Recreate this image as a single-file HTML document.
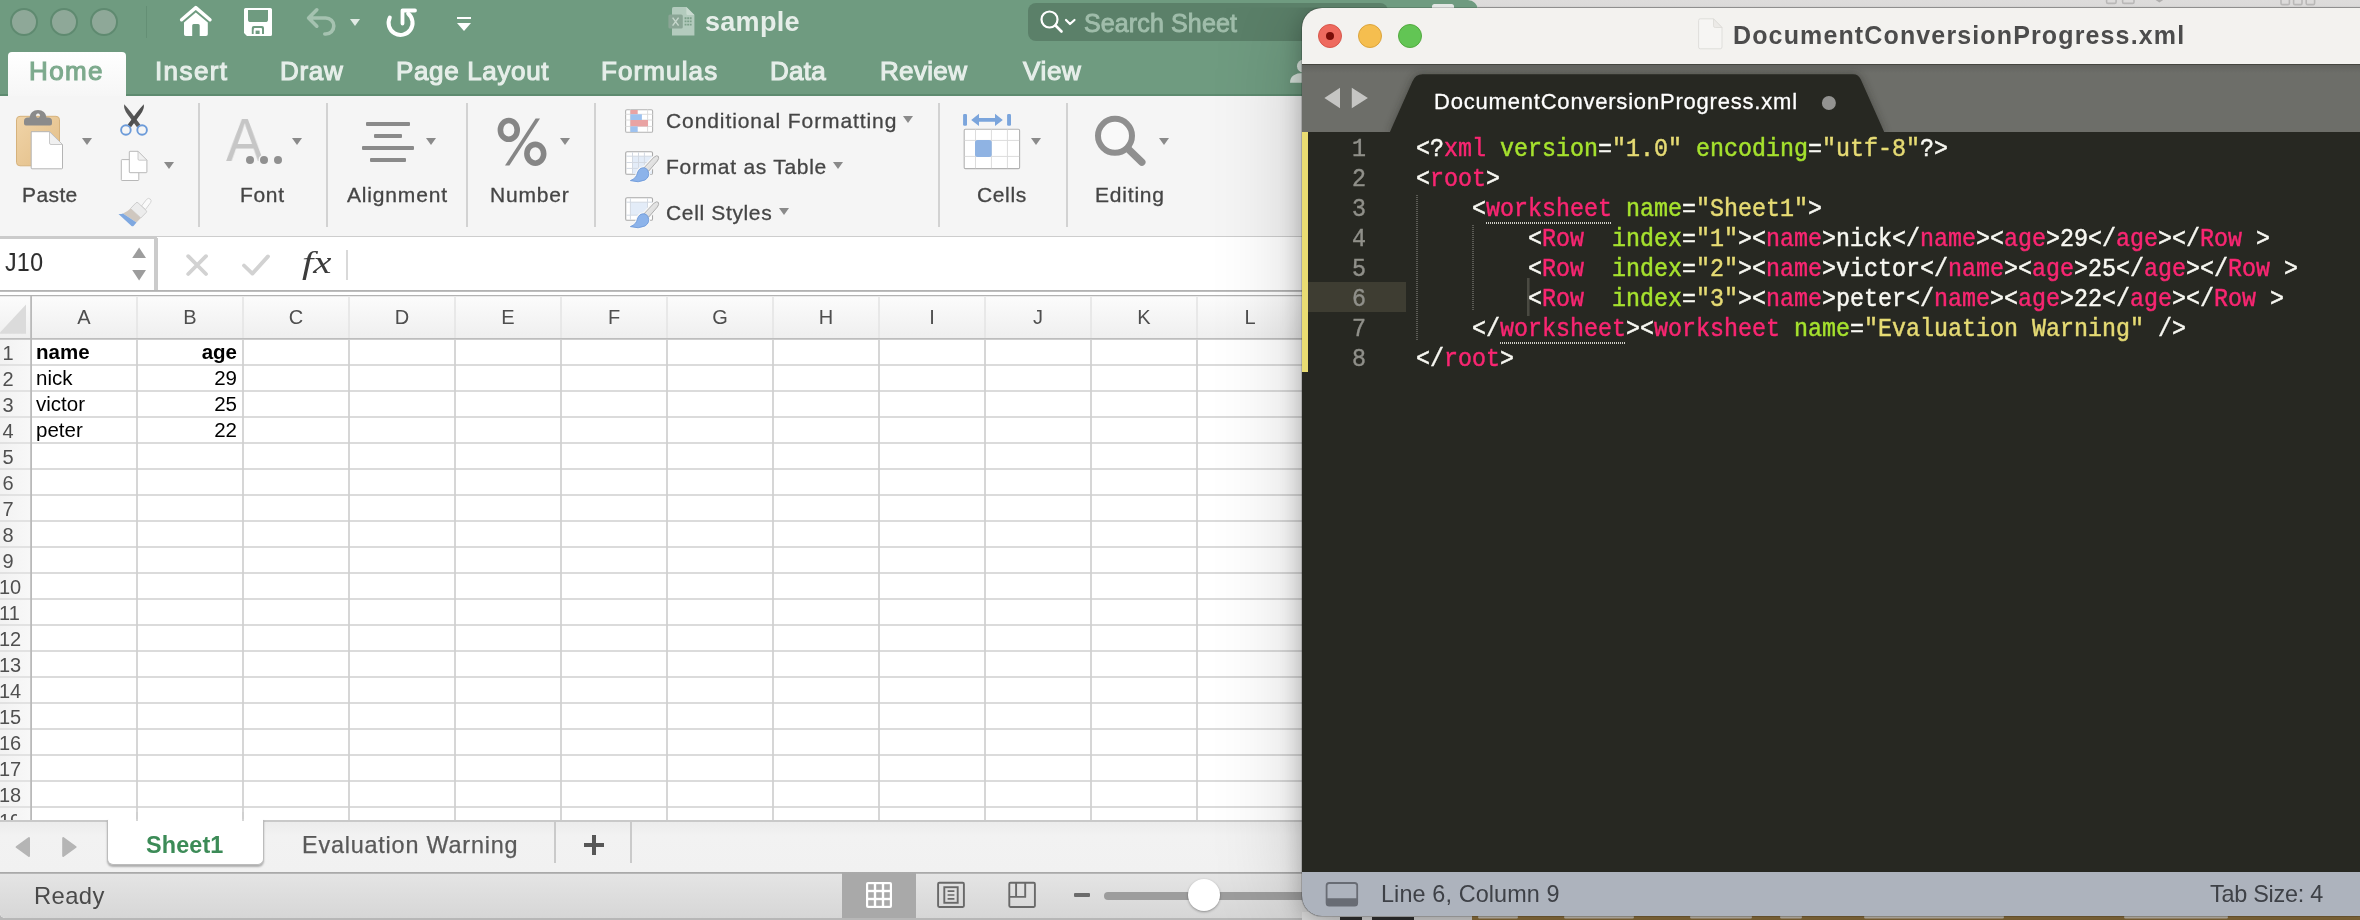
<!DOCTYPE html>
<html>
<head>
<meta charset="utf-8">
<title>screen</title>
<style>
html,body{margin:0;padding:0;}
body{width:2360px;height:920px;overflow:hidden;position:relative;background:#b7b7b7;font-family:"Liberation Sans",sans-serif;}
.a{position:absolute;}
.t{position:absolute;white-space:nowrap;line-height:1;will-change:transform;}
/* ---------- Excel ---------- */
#xl{left:0;top:0;width:1478px;height:918.2px;background:#fff;overflow:hidden;border-radius:0 10px 6px 5px;}
#xl-title{left:0;top:0;width:1478px;height:95.6px;background:linear-gradient(#6f9b80,#6f9b80 94.2px,#5e8b70 94.4px,#5e8b70);}
#xl-ribbon{left:0;top:95.6px;width:1478px;height:142px;background:#f5f5f5;}
#xl-fbar{left:0;top:237px;width:1478px;height:58px;background:#fff;}
.tl{top:8px;width:24px;height:24px;border-radius:50%;background:#8ea898;border:2px solid #5f8a70;}
.rt{color:#e6eee9;font-size:26px;top:58px;-webkit-text-stroke:1.1px #e6eee9;}
.rl{color:#454545;font-size:21px;-webkit-text-stroke:0.3px #454545;}
.sep{position:absolute;width:2px;background:#d2d2d2;top:103px;height:124px;}
.dd{position:absolute;width:0;height:0;border-left:5px solid transparent;border-right:5px solid transparent;border-top:7px solid #8a8a8a;}
/* grid */
#grid{left:0;top:295px;width:1478px;height:526px;background:#fff;overflow:hidden;}
.ch{color:#4e4e4e;font-size:20px;top:306.6px;width:106px;text-align:center;}
.rh{color:#505050;font-size:20px;left:-1.3px;}
.ct{color:#000;font-size:20.5px;}
/* ---------- Sublime ---------- */
#st{left:1302px;top:8px;width:1080px;height:907.5px;background:#272822;border-radius:20px 0 0 20px;overflow:hidden;box-shadow:0 0 0 1px rgba(0,0,0,.16),0 0 90px 0 rgba(0,0,0,.2),0 6px 24px 0 rgba(0,0,0,.26);clip-path:inset(-0.5px 0 -20px -140px);}
#st-title{left:0;top:0;width:1080px;height:56px;background:#f3f2ef;}
#st-tabs{left:0;top:57px;width:1080px;height:67px;background:linear-gradient(#62635f,#6d6e69 8px,#6d6e69);}
#st-status{left:0;top:863.6px;width:1080px;height:44px;background:#adb3bd;}
.stl{top:16px;width:22.4px;height:22.4px;border-radius:50%;border:1px solid;}
.code{font-family:"Liberation Mono",monospace;font-size:23.33px;color:#f8f8f2;position:absolute;white-space:pre;line-height:30px;left:114px;transform:scaleY(1.08);transform-origin:0 100%;-webkit-text-stroke-width:0.45px;margin-top:4px;will-change:transform;}
.ln{font-family:"Liberation Mono",monospace;font-size:23.33px;color:#90908a;position:absolute;line-height:30px;left:50px;transform:scaleY(1.08);transform-origin:0 100%;-webkit-text-stroke-width:0.4px;margin-top:4px;will-change:transform;}
.p{color:#f92672}.g{color:#a6e22e}.y{color:#e6db74}
</style>
</head>
<body>
<!-- background window sliver -->
<div class="a" style="left:1400px;top:0;width:960px;height:8px;background:linear-gradient(#dddcdb,#dbdad9 6.4px,#a9a9a8 7.2px,#a9a9a8);"></div>
<svg class="a" style="left:2090px;top:0" width="240" height="7" viewBox="2090 0 240 7">
  <g fill="none" stroke="#b9b8b7" stroke-width="1.6"><rect x="2106.6" y="-4" width="9.5" height="7.4" rx="1.4"/><rect x="2122.6" y="-4" width="11.4" height="7.4" rx="1.4"/>
  <rect x="2281" y="-4" width="8.4" height="8.6" rx="1.4"/><rect x="2293.6" y="-4" width="8.4" height="8.6" rx="1.4"/><rect x="2306.2" y="-4" width="8.4" height="8.6" rx="1.4"/></g>
  <path d="M2155.6 0 L2159.4 2.6 L2163.2 0 Z" fill="#b0afae"/>
</svg>

<!-- ======================= EXCEL ======================= -->
<div id="xl" class="a">

  <div id="xl-title" class="a">
    <!-- inactive traffic lights -->
    <div class="a tl" style="left:10px;"></div>
    <div class="a tl" style="left:50px;"></div>
    <div class="a tl" style="left:90px;"></div>
    <div class="a" style="left:146px;top:6px;width:1px;height:32px;background:#648f75;"></div>
    <!-- home -->
    <svg class="a" style="left:176px;top:2px" width="40" height="38" viewBox="0 0 40 38">
      <path d="M5.6 17.8 L19.8 5.6 L34 17.8" fill="none" stroke="#fff" stroke-width="3.4" stroke-linecap="round" stroke-linejoin="round"/>
      <path d="M8 20.6 L19.8 10.6 L31.8 20.6 V32.2 Q31.8 34 30 34 H23.7 V23.6 Q23.7 22 22.2 22 H17.6 Q16.2 22 16.2 23.6 V34 H9.8 Q8 34 8 32.2 Z" fill="#fff"/>
    </svg>
    <!-- save -->
    <svg class="a" style="left:242px;top:6px" width="32" height="32" viewBox="0 0 32 32">
      <path d="M3.6 2 H28.4 Q30 2 30 3.6 V28.4 Q30 30 28.4 30 H5 L2 27 V3.6 Q2 2 3.6 2 Z M6 4 V13.4 Q6 16 8.6 16 H23.4 Q26 16 26 13.4 V4 Z M9.8 28 H22 V22 Q22 20 20 20 H11.8 Q9.8 20 9.8 22 Z" fill="#fff" fill-rule="evenodd"/>
      <path d="M11.8 28 V24.2 Q11.8 22.6 13.4 22.6 H18.4 Q20 22.6 20 24.2 V28 M14 28 V25.4 H17.6 V28" fill="#fff" stroke="none"/>
      <path d="M11.8 28 V23 Q11.8 22 12.8 22 H19 Q20 22 20 23 V28 Z" fill="#fff"/>
      <rect x="13.6" y="24.6" width="4" height="3.4" fill="#6f9b80"/>
    </svg>
    <!-- undo -->
    <svg class="a" style="left:300px;top:2px" width="42" height="38" viewBox="0 0 42 38">
      <path d="M16.8 7.8 L8.6 16 L16.8 24.2 M9.4 16 H25.8 A8 8 0 0 1 25.8 32 H24.8" fill="none" stroke="#a5c2b0" stroke-width="3.6" stroke-linecap="round" stroke-linejoin="round"/>
    </svg>
    <div class="dd" style="left:349.7px;top:19px;border-top-color:#e0eae4;border-left-width:5.3px;border-right-width:5.3px;border-top-width:7.8px"></div>
    <!-- redo/repeat -->
    <svg class="a" style="left:380.2px;top:2.9px" width="42" height="40" viewBox="0 0 42 40">
      <path d="M9.8 14.6 A12 12 0 1 0 28.2 10.6" fill="none" stroke="#fff" stroke-width="4" stroke-linecap="round"/>
      <path d="M22.5 20.5 V7.5 H35" fill="none" stroke="#fff" stroke-width="3.8" stroke-linecap="round" stroke-linejoin="round"/>
    </svg>
    <!-- customize -->
    <div class="a" style="left:456.8px;top:17px;width:14.4px;height:2.2px;background:#fff;"></div>
    <div class="dd" style="left:456.6px;top:23px;border-top-color:#fff;border-left-width:7.4px;border-right-width:7.4px;border-top-width:8.2px"></div>
    <!-- file icon + name -->
    <svg class="a" style="left:666px;top:4px" width="32" height="34" viewBox="0 0 32 34">
      <path d="M7.6 3 H20.4 L28.4 11 V31.6 H6 V4.6 Q6 3 7.6 3 Z" fill="#b3cbbd"/>
      <path d="M20.4 3 L28.4 11 H21.6 Q20.4 11 20.4 9.8 Z" fill="#c9dad0"/>
      <rect x="2.4" y="10.4" width="14.4" height="14.2" rx="1.6" fill="#8aa595"/>
      <path d="M6.6 13.6 L12.6 21.6 M12.6 13.6 L6.6 21.6" stroke="#c5d6cb" stroke-width="1.5" fill="none"/>
      <path d="M18.6 14.2 H25.6 M18.6 17.4 H25.6 M18.6 20.6 H25.6" stroke="#7da08a" stroke-width="1.9" stroke-dasharray="1.9 0.7" fill="none"/>
    </svg>
    <div class="t" id="x-sample" style="left:704.6px;top:9px;font-size:27px;font-weight:bold;color:#e6eee9;letter-spacing:0.28px">sample</div>
    <!-- search -->
    <div class="a" style="left:1027.8px;top:3px;width:360.6px;height:37.8px;border-radius:8px;background:#5b8069;"></div>
    <svg class="a" style="left:1038px;top:9px" width="40" height="26" viewBox="0 0 40 26">
      <circle cx="11.5" cy="10.5" r="8" fill="none" stroke="#fff" stroke-width="2.2"/>
      <path d="M17.5 16.5 L23.5 22.5" stroke="#fff" stroke-width="2.6" stroke-linecap="round"/>
      <path d="M28 11 L32 15 L36.5 11" stroke="#fff" stroke-width="2.2" fill="none" stroke-linecap="round" stroke-linejoin="round"/>
    </svg>
    <div class="t" id="x-search" style="left:1084.0px;top:11.3px;font-size:25px;color:#a0bdab;-webkit-text-stroke:0.9px #a0bdab;letter-spacing:0.127px">Search Sheet</div>
    <div class="a" style="left:1432px;top:4px;width:22px;height:8px;border-radius:2.5px;background:#e3e6e4;"></div>
    <!-- tabs -->
    <div class="a" style="left:8px;top:52px;width:118.2px;height:46px;border-radius:4px 4px 0 0;background:linear-gradient(#ffffff,#f6f6f6);"></div>
    <div class="t rt" id="x-home" style="left:29.4px;color:#7daa8d;-webkit-text-stroke:1.1px #7daa8d;letter-spacing:1.367px">Home</div>
    <div class="t rt" id="x-insert" style="left:155.0px;letter-spacing:1.4px">Insert</div>
    <div class="t rt" id="x-draw" style="left:279.9px;letter-spacing:0.701px">Draw</div>
    <div class="t rt" id="x-pl" style="left:395.5px;letter-spacing:0.65px">Page Layout</div>
    <div class="t rt" id="x-form" style="left:600.8px;letter-spacing:1.113px">Formulas</div>
    <div class="t rt" id="x-data" style="left:769.9px;letter-spacing:0.3px">Data</div>
    <div class="t rt" id="x-review" style="left:880.3px;letter-spacing:0.34px">Review</div>
    <div class="t rt" id="x-view" style="left:1022.9px;letter-spacing:0.667px">View</div>
    <!-- person icon -->
    <svg class="a" style="left:1286px;top:55px" width="34" height="30" viewBox="0 0 34 30">
      <circle cx="17.6" cy="11.2" r="6.6" fill="#dce7e0"/>
      <path d="M4 27.8 Q4 18 17.6 18 Q31.2 18 31.2 27.8 Z" fill="#dce7e0"/>
    </svg>
  </div>

  <div id="xl-ribbon" class="a">
  </div>
  <!-- ribbon content (page coords) -->
  <div class="sep" style="left:198px"></div>
  <div class="sep" style="left:326px"></div>
  <div class="sep" style="left:466px"></div>
  <div class="sep" style="left:594px"></div>
  <div class="sep" style="left:938px"></div>
  <div class="sep" style="left:1066px"></div>
  <!-- paste -->
  <svg class="a" style="left:10px;top:104px" width="60" height="70" viewBox="0 0 60 70">
    <defs><linearGradient id="cb" x1="0" y1="0" x2="1" y2="1"><stop offset="0" stop-color="#f0d4a8"/><stop offset="1" stop-color="#e2bd86"/></linearGradient></defs>
    <rect x="6.5" y="12.3" width="43" height="49.5" rx="3.5" fill="url(#cb)" stroke="#d6b27c" stroke-width="1"/>
    <path d="M16 21.5 Q14 21.5 14 19.5 V17 Q14 13.5 18 13.5 H19.5 Q20.5 6 28 6 Q35.5 6 36.5 13.5 H38 Q42 13.5 42 17 V19.5 Q42 21.5 40 21.5 Z M28 9.6 A2.1 2.1 0 1 0 28.01 9.6 Z" fill="#8b8b8b" fill-rule="evenodd"/>
    <path d="M21.5 27.7 H39.5 L52.5 40.5 V64 Q52.5 64.8 51.7 64.8 H22 Q21.2 64.8 21.2 64 V28.5 Q21.2 27.7 22 27.7 Z" fill="#fff" stroke="#b4b4b4" stroke-width="1"/>
    <path d="M39.5 27.7 V39 Q39.5 40.5 41 40.5 H52.5 Z" fill="#f0f0f0" stroke="#bdbdbd" stroke-width="0.8"/>
  </svg>
  <div class="dd" style="left:82px;top:138px"></div>
  <div class="t rl" id="r-paste" style="left:21.7px;top:183.6px;letter-spacing:0.4px">Paste</div>
  <!-- scissors -->
  <svg class="a" style="left:114px;top:100px" width="40" height="40" viewBox="0 0 40 40">
    <path d="M10.2 4.2 Q9.4 9 13.6 14.4 L23 27.2 L26.4 24.8 L17 12.2 Q13 7.2 10.2 4.2 Z" fill="#595959"/>
    <path d="M29.8 4.2 Q30.6 9 26.4 14.4 L17 27.2 L13.6 24.8 L23 12.2 Q27 7.2 29.8 4.2 Z" fill="#505050"/>
    <circle cx="11.9" cy="30" r="4.8" fill="#f5f5f5" stroke="#6c9bd9" stroke-width="1.9"/>
    <circle cx="28.1" cy="30" r="4.8" fill="#f5f5f5" stroke="#6c9bd9" stroke-width="1.9"/>
  </svg>
  <!-- copy -->
  <svg class="a" style="left:116px;top:147px" width="36" height="38" viewBox="0 0 36 38">
    <rect x="5.3" y="12.6" width="17.5" height="20.9" rx="0.8" fill="#fff" stroke="#b8b8b8" stroke-width="1"/>
    <path d="M14 4.3 H22 L30.9 13.2 V25 Q30.9 25.7 30.2 25.7 H14 Q13.3 25.7 13.3 25 V5 Q13.3 4.3 14 4.3 Z" fill="#fff" stroke="#b8b8b8" stroke-width="1"/>
    <path d="M22 4.3 V12 Q22 13.2 23.2 13.2 H30.9 Z" fill="#f1f1f1" stroke="#c0c0c0" stroke-width="0.8"/>
  </svg>
  <div class="dd" style="left:164px;top:162px"></div>
  <!-- format painter -->
  <svg class="a" style="left:114px;top:194px" width="42" height="36" viewBox="0 0 42 36">
    <path d="M27.5 12 L32.6 5.4 Q34.3 3.5 36.2 5 Q38 6.6 36.6 8.6 L31.5 15.5 Z" fill="#fafafa" stroke="#cfcfcf" stroke-width="0.9"/>
    <path d="M16.5 14.5 L22 8.8 Q23 8 24 8.8 L32.2 16.5 Q33 17.5 32.2 18.5 L26.8 24 Z" fill="#ececec" stroke="#c8c8c8" stroke-width="0.9"/>
    <path d="M16.5 14.5 L26.8 24 L22.5 28.5 L9 19.5 Q13.5 17.5 16.5 14.5 Z" fill="#cfc7bf"/>
    <path d="M4.5 20 Q7 20.2 9 19.5 L22.5 28.5 L19.5 32 Q18.5 32.6 17.5 32 Z" fill="#7fa8e0"/>
  </svg>
  <!-- font -->
  <div class="t" style="left:226.2px;top:110.2px;font-size:61px;color:#c6c6c6;transform:scaleX(0.92);transform-origin:0 0;">A</div>
  <div class="a" style="left:246px;top:156px;width:8px;height:8px;border-radius:50%;background:#909090;box-shadow:0 0 0 1.5px #f5f5f5"></div>
  <div class="a" style="left:260px;top:156px;width:8px;height:8px;border-radius:50%;background:#909090;box-shadow:0 0 0 1.5px #f5f5f5"></div>
  <div class="a" style="left:274px;top:156px;width:8px;height:8px;border-radius:50%;background:#909090;"></div>
  <div class="dd" style="left:292px;top:138px"></div>
  <div class="t rl" id="r-font" style="left:240.4px;top:183.6px;letter-spacing:0.667px">Font</div>
  <!-- alignment -->
  <div class="a" style="left:366px;top:122px;width:44px;height:4px;background:#8a8a8a;border-radius:1px"></div>
  <div class="a" style="left:374px;top:134px;width:28px;height:4px;background:#8a8a8a;border-radius:1px"></div>
  <div class="a" style="left:362px;top:146px;width:52px;height:4px;background:#8a8a8a;border-radius:1px"></div>
  <div class="a" style="left:370px;top:158px;width:36px;height:4px;background:#8a8a8a;border-radius:1px"></div>
  <div class="dd" style="left:426px;top:138px"></div>
  <div class="t rl" id="r-align" style="left:346.6px;top:183.6px;letter-spacing:0.825px">Alignment</div>
  <!-- number -->
  <svg class="a" style="left:492px;top:112px" width="60" height="60" viewBox="0 0 60 60">
    <ellipse cx="16.8" cy="17.9" rx="8.4" ry="9.4" fill="none" stroke="#868686" stroke-width="5.6"/>
    <ellipse cx="43.3" cy="41.8" rx="8.4" ry="9.4" fill="none" stroke="#868686" stroke-width="5.6"/>
    <path d="M43.6 6.5 H48 L17.4 53.5 H13 Z" fill="#868686"/>
  </svg>
  <div class="dd" style="left:560px;top:138px"></div>
  <div class="t rl" id="r-number" style="left:490.0px;top:183.6px;letter-spacing:0.8px">Number</div>
  <!-- conditional formatting -->
  <svg class="a" style="left:622px;top:106px" width="34" height="30" viewBox="0 0 34 30">
    <rect x="3.6" y="3.7" width="27" height="22.6" rx="1.4" fill="#fff" stroke="#b3b3b3" stroke-width="1.1"/>
    <path d="M8.4 3.5 V26 M25.6 3.5 V26 M3.5 8.3 H30.5 M3.5 14 H30.5 M3.5 20.4 H30.5" stroke="#dcdcdc" stroke-width="1" fill="none"/>
    <rect x="8.4" y="4" width="7.3" height="4.3" fill="#e9a3a3"/>
    <rect x="8.4" y="8.3" width="11.5" height="5.7" fill="#9ec2ef"/>
    <rect x="8.4" y="14" width="17.6" height="6.4" fill="#e9a3a3"/>
    <rect x="8.4" y="20.4" width="7.3" height="5.6" fill="#9ec2ef"/>
  </svg>
  <div class="t rl" id="r-cf" style="left:666.0px;top:110px;letter-spacing:0.909px">Conditional Formatting</div>
  <div class="dd" style="left:903px;top:116px"></div>
  <!-- format as table -->
  <svg class="a" style="left:622px;top:148px" width="42" height="40" viewBox="0 0 42 40">
    <defs><linearGradient id="bh" x1="0" y1="0" x2="1" y2="1"><stop offset="0" stop-color="#f2f2f2"/><stop offset="1" stop-color="#d2d2d2"/></linearGradient></defs>
    <rect x="3.7" y="3.7" width="26.8" height="22.6" rx="1.4" fill="#fff" stroke="#a9a9a9" stroke-width="1.1"/>
    <rect x="10.5" y="8.2" width="19.4" height="17.6" fill="#e3ecf8"/>
    <path d="M10.5 4.3 V25.8 M16.5 4.3 V25.8 M22.4 4.3 V25.8 M4.3 8.2 H30 M4.3 14.5 H30 M4.3 20.4 H30" stroke="#d3d9e2" stroke-width="1" fill="none"/>
    <g>
      <path d="M22 19.8 L32.2 9 Q35 6.8 36.4 8.4 Q37.4 10.2 35.4 13 L26.6 23.2 Z" fill="none" stroke="#f7f7f7" stroke-width="3.4" stroke-linejoin="round"/>
      <path d="M25.8 22.4 Q28.6 28.4 23 32 Q16.5 35.2 8.4 32.6 Q14.4 30.4 15.4 25 Q17 19.4 22.4 19.8 Q24.6 20.2 25.8 22.4 Z" fill="none" stroke="#f7f7f7" stroke-width="3" stroke-linejoin="round"/>
      <path d="M22 19.8 L32.2 9 Q35 6.8 36.4 8.4 Q37.4 10.2 35.4 13 L26.6 23.2 Z" fill="url(#bh)" stroke="#a7a7a7" stroke-width="0.9" stroke-linejoin="round"/>
      <path d="M25.8 22.4 Q28.6 28.4 23 32 Q16.5 35.2 8.4 32.6 Q14.4 30.4 15.4 25 Q17 19.4 22.4 19.8 Q24.6 20.2 25.8 22.4 Z" fill="#8cb3ea" stroke="#6e9ad9" stroke-width="0.9" stroke-linejoin="round"/>
    </g>
  </svg>
  <div class="t rl" id="r-fat" style="left:666.0px;top:156px;letter-spacing:0.72px">Format as Table</div>
  <div class="dd" style="left:833px;top:162px"></div>
  <!-- cell styles -->
  <svg class="a" style="left:622px;top:194px" width="42" height="40" viewBox="0 0 42 40">
    <rect x="3.7" y="3.7" width="26.8" height="22.6" rx="1.4" fill="#fff" stroke="#a9a9a9" stroke-width="1.1"/>
    <rect x="8.4" y="8.2" width="17.1" height="13" fill="#e3ecf8"/>
    <path d="M8.4 4.3 V25.8 M25.5 4.3 V25.8 M4.3 8.2 H30 M4.3 21.2 H30" stroke="#d3d9e2" stroke-width="1" fill="none"/>
    <g>
      <path d="M22 19.8 L32.2 9 Q35 6.8 36.4 8.4 Q37.4 10.2 35.4 13 L26.6 23.2 Z" fill="none" stroke="#f7f7f7" stroke-width="3.4" stroke-linejoin="round"/>
      <path d="M25.8 22.4 Q28.6 28.4 23 32 Q16.5 35.2 8.4 32.6 Q14.4 30.4 15.4 25 Q17 19.4 22.4 19.8 Q24.6 20.2 25.8 22.4 Z" fill="none" stroke="#f7f7f7" stroke-width="3" stroke-linejoin="round"/>
      <path d="M22 19.8 L32.2 9 Q35 6.8 36.4 8.4 Q37.4 10.2 35.4 13 L26.6 23.2 Z" fill="url(#bh)" stroke="#a7a7a7" stroke-width="0.9" stroke-linejoin="round"/>
      <path d="M25.8 22.4 Q28.6 28.4 23 32 Q16.5 35.2 8.4 32.6 Q14.4 30.4 15.4 25 Q17 19.4 22.4 19.8 Q24.6 20.2 25.8 22.4 Z" fill="#8cb3ea" stroke="#6e9ad9" stroke-width="0.9" stroke-linejoin="round"/>
    </g>
  </svg>
  <div class="t rl" id="r-cs" style="left:666.0px;top:202px;letter-spacing:0.65px">Cell Styles</div>
  <div class="dd" style="left:779px;top:208px"></div>
  <!-- cells -->
  <svg class="a" style="left:958px;top:108px" width="68" height="66" viewBox="0 0 68 66">
    <rect x="5.1" y="6" width="3.9" height="11.7" rx="1.2" fill="#7ba5dc"/>
    <rect x="49.1" y="6" width="3.9" height="11.7" rx="1.2" fill="#7ba5dc"/>
    <path d="M13.2 11.9 L21 5.8 V10.1 H37 V5.8 L44.8 11.9 L37 18 V13.7 H21 V18 Z" fill="#7ba5dc"/>
    <rect x="6.2" y="21.2" width="55.4" height="39.4" rx="1.2" fill="#fff" stroke="#b2b2b2" stroke-width="1.1"/>
    <path d="M17.5 21.6 V60.2 M33.4 21.6 V60.2 M49.4 21.6 V60.2 M6.6 32.4 H61.2 M6.6 48.4 H61.2" stroke="#dcdcdc" stroke-width="1" fill="none"/>
    <rect x="17" y="32.1" width="16.7" height="16.8" rx="2.5" fill="#8fb3e3"/>
  </svg>
  <div class="dd" style="left:1031px;top:138px"></div>
  <div class="t rl" id="r-cells" style="left:976.9px;top:183.6px;letter-spacing:0.625px">Cells</div>
  <!-- editing -->
  <svg class="a" style="left:1090px;top:110px" width="60" height="60" viewBox="0 0 60 60">
    <circle cx="25" cy="25.8" r="17" fill="#f9f9f9" stroke="#8f8f8f" stroke-width="6"/>
    <path d="M38.6 39.4 L51.8 52.2" stroke="#8f8f8f" stroke-width="7.4" stroke-linecap="round"/>
  </svg>
  <div class="dd" style="left:1159px;top:138px"></div>
  <div class="t rl" id="r-edit" style="left:1095.1px;top:183.6px;letter-spacing:0.801px">Editing</div>
  <div class="a" style="left:0;top:236px;width:1478px;height:2px;background:#cdcdcd"></div>

  <div id="xl-fbar" class="a"></div>
  <!-- formula bar -->
  <div class="a" style="left:0;top:236px;width:157px;height:3.4px;background:#cbcbcb"></div>
  <div class="a" style="left:154.4px;top:238px;width:3.2px;height:52px;background:#cbcbcb"></div>
  <div class="t" id="f-j10" style="left:5.0px;top:250.2px;font-size:25.6px;color:#2b2b2b;letter-spacing:0.5px;transform:scaleX(0.9);transform-origin:0 0">J10</div>
  <svg class="a" style="left:130px;top:245px" width="18" height="38" viewBox="0 0 18 38">
    <path d="M9.1 2.6 L16 13 H2.2 Z" fill="#9d9d9d"/>
    <path d="M9.1 35.6 L16 25 H2.2 Z" fill="#9d9d9d"/>
  </svg>
  <svg class="a" style="left:184px;top:252px" width="26" height="26" viewBox="0 0 26 26">
    <path d="M4.2 4.2 L22 22 M22 4.2 L4.2 22" stroke="#d2d2d2" stroke-width="3.8" stroke-linecap="round" fill="none"/>
  </svg>
  <svg class="a" style="left:240px;top:252px" width="32" height="26" viewBox="0 0 32 26">
    <path d="M4 13.5 L12.4 21.6 L28 4.4" stroke="#d2d2d2" stroke-width="3.8" stroke-linecap="round" stroke-linejoin="round" fill="none"/>
  </svg>
  <div class="t" id="f-fx" style="left:301.6px;top:247px;font-family:'Liberation Serif',serif;font-style:italic;font-size:31px;color:#3c3c3c;letter-spacing:0px;transform:scaleX(1.32);transform-origin:0 0">fx</div>
  <div class="a" style="left:346.2px;top:250.4px;width:1.6px;height:29.4px;background:#d9d9d9"></div>
  <div class="a" style="left:0;top:290px;width:1478px;height:2px;background:linear-gradient(#adadad,#c4c4c4)"></div>
  <div id="grid" class="a">
    <div class="a" style="left:0;top:0;width:1478px;height:43px;background:linear-gradient(#fcfcfc,#efefef)"></div>
    <div class="a" style="left:0;top:43px;width:31px;height:490px;background:linear-gradient(90deg,#f2f2f2,#f8f8f8)"></div>
    <svg class="a" style="left:0;top:0" width="1478" height="526" viewBox="0 295 1478 526">
<path d="M31 365 H1478" stroke="#cfcfcf" stroke-width="1.7"/>
<path d="M0 365 H31" stroke="#dedede" stroke-width="1.7"/>
<path d="M31 391 H1478" stroke="#cfcfcf" stroke-width="1.7"/>
<path d="M0 391 H31" stroke="#dedede" stroke-width="1.7"/>
<path d="M31 417 H1478" stroke="#cfcfcf" stroke-width="1.7"/>
<path d="M0 417 H31" stroke="#dedede" stroke-width="1.7"/>
<path d="M31 443 H1478" stroke="#cfcfcf" stroke-width="1.7"/>
<path d="M0 443 H31" stroke="#dedede" stroke-width="1.7"/>
<path d="M31 469 H1478" stroke="#cfcfcf" stroke-width="1.7"/>
<path d="M0 469 H31" stroke="#dedede" stroke-width="1.7"/>
<path d="M31 495 H1478" stroke="#cfcfcf" stroke-width="1.7"/>
<path d="M0 495 H31" stroke="#dedede" stroke-width="1.7"/>
<path d="M31 521 H1478" stroke="#cfcfcf" stroke-width="1.7"/>
<path d="M0 521 H31" stroke="#dedede" stroke-width="1.7"/>
<path d="M31 547 H1478" stroke="#cfcfcf" stroke-width="1.7"/>
<path d="M0 547 H31" stroke="#dedede" stroke-width="1.7"/>
<path d="M31 573 H1478" stroke="#cfcfcf" stroke-width="1.7"/>
<path d="M0 573 H31" stroke="#dedede" stroke-width="1.7"/>
<path d="M31 599 H1478" stroke="#cfcfcf" stroke-width="1.7"/>
<path d="M0 599 H31" stroke="#dedede" stroke-width="1.7"/>
<path d="M31 625 H1478" stroke="#cfcfcf" stroke-width="1.7"/>
<path d="M0 625 H31" stroke="#dedede" stroke-width="1.7"/>
<path d="M31 651 H1478" stroke="#cfcfcf" stroke-width="1.7"/>
<path d="M0 651 H31" stroke="#dedede" stroke-width="1.7"/>
<path d="M31 677 H1478" stroke="#cfcfcf" stroke-width="1.7"/>
<path d="M0 677 H31" stroke="#dedede" stroke-width="1.7"/>
<path d="M31 703 H1478" stroke="#cfcfcf" stroke-width="1.7"/>
<path d="M0 703 H31" stroke="#dedede" stroke-width="1.7"/>
<path d="M31 729 H1478" stroke="#cfcfcf" stroke-width="1.7"/>
<path d="M0 729 H31" stroke="#dedede" stroke-width="1.7"/>
<path d="M31 755 H1478" stroke="#cfcfcf" stroke-width="1.7"/>
<path d="M0 755 H31" stroke="#dedede" stroke-width="1.7"/>
<path d="M31 781 H1478" stroke="#cfcfcf" stroke-width="1.7"/>
<path d="M0 781 H31" stroke="#dedede" stroke-width="1.7"/>
<path d="M31 807 H1478" stroke="#cfcfcf" stroke-width="1.7"/>
<path d="M0 807 H31" stroke="#dedede" stroke-width="1.7"/>
<path d="M31 833 H1478" stroke="#cfcfcf" stroke-width="1.7"/>
<path d="M0 833 H31" stroke="#dedede" stroke-width="1.7"/>
<path d="M137 340 V821" stroke="#cfcfcf" stroke-width="1.7"/>
<path d="M137 297 V338" stroke="#e6e6e6" stroke-width="1.7"/>
<path d="M243 340 V821" stroke="#cfcfcf" stroke-width="1.7"/>
<path d="M243 297 V338" stroke="#e6e6e6" stroke-width="1.7"/>
<path d="M349 340 V821" stroke="#cfcfcf" stroke-width="1.7"/>
<path d="M349 297 V338" stroke="#e6e6e6" stroke-width="1.7"/>
<path d="M455 340 V821" stroke="#cfcfcf" stroke-width="1.7"/>
<path d="M455 297 V338" stroke="#e6e6e6" stroke-width="1.7"/>
<path d="M561 340 V821" stroke="#cfcfcf" stroke-width="1.7"/>
<path d="M561 297 V338" stroke="#e6e6e6" stroke-width="1.7"/>
<path d="M667 340 V821" stroke="#cfcfcf" stroke-width="1.7"/>
<path d="M667 297 V338" stroke="#e6e6e6" stroke-width="1.7"/>
<path d="M773 340 V821" stroke="#cfcfcf" stroke-width="1.7"/>
<path d="M773 297 V338" stroke="#e6e6e6" stroke-width="1.7"/>
<path d="M879 340 V821" stroke="#cfcfcf" stroke-width="1.7"/>
<path d="M879 297 V338" stroke="#e6e6e6" stroke-width="1.7"/>
<path d="M985 340 V821" stroke="#cfcfcf" stroke-width="1.7"/>
<path d="M985 297 V338" stroke="#e6e6e6" stroke-width="1.7"/>
<path d="M1091 340 V821" stroke="#cfcfcf" stroke-width="1.7"/>
<path d="M1091 297 V338" stroke="#e6e6e6" stroke-width="1.7"/>
<path d="M1197 340 V821" stroke="#cfcfcf" stroke-width="1.7"/>
<path d="M1197 297 V338" stroke="#e6e6e6" stroke-width="1.7"/>
<path d="M1303 340 V821" stroke="#cfcfcf" stroke-width="1.7"/>
<path d="M1303 297 V338" stroke="#e6e6e6" stroke-width="1.7"/>
<path d="M1409 340 V821" stroke="#cfcfcf" stroke-width="1.7"/>
<path d="M1409 297 V338" stroke="#e6e6e6" stroke-width="1.7"/>
<path d="M1515 340 V821" stroke="#cfcfcf" stroke-width="1.7"/>
<path d="M1515 297 V338" stroke="#e6e6e6" stroke-width="1.7"/>
<path d="M0 295.2 H1478" stroke="#b2b2b2" stroke-width="2"/>
<path d="M0 338.8 H1478" stroke="#bdbdbd" stroke-width="1.8"/>
<path d="M31.1 296 V821" stroke="#b9b9b9" stroke-width="1.8"/>
<path d="M26 304.4 V333.7 H-1 Z" fill="#dbdbdb"/>
</svg>
  </div>
  <div class="t ch" style="left:31px;">A</div>
  <div class="t ch" style="left:137px;">B</div>
  <div class="t ch" style="left:243px;">C</div>
  <div class="t ch" style="left:349px;">D</div>
  <div class="t ch" style="left:455px;">E</div>
  <div class="t ch" style="left:561px;">F</div>
  <div class="t ch" style="left:667px;">G</div>
  <div class="t ch" style="left:773px;">H</div>
  <div class="t ch" style="left:879px;">I</div>
  <div class="t ch" style="left:985px;">J</div>
  <div class="t ch" style="left:1091px;">K</div>
  <div class="t ch" style="left:1197px;">L</div>
  <div class="t ch" style="left:1303px;">M</div>
  <div class="t rh" style="top:342.6px;width:18px;text-align:center;">1</div>
  <div class="t rh" style="top:368.6px;width:18px;text-align:center;">2</div>
  <div class="t rh" style="top:394.6px;width:18px;text-align:center;">3</div>
  <div class="t rh" style="top:420.6px;width:18px;text-align:center;">4</div>
  <div class="t rh" style="top:446.6px;width:18px;text-align:center;">5</div>
  <div class="t rh" style="top:472.6px;width:18px;text-align:center;">6</div>
  <div class="t rh" style="top:498.6px;width:18px;text-align:center;">7</div>
  <div class="t rh" style="top:524.6px;width:18px;text-align:center;">8</div>
  <div class="t rh" style="top:550.6px;width:18px;text-align:center;">9</div>
  <div class="t rh" style="top:576.6px;width:18px;text-align:center;">10</div>
  <div class="t rh" style="top:602.6px;width:18px;text-align:center;">11</div>
  <div class="t rh" style="top:628.6px;width:18px;text-align:center;">12</div>
  <div class="t rh" style="top:654.6px;width:18px;text-align:center;">13</div>
  <div class="t rh" style="top:680.6px;width:18px;text-align:center;">14</div>
  <div class="t rh" style="top:706.6px;width:18px;text-align:center;">15</div>
  <div class="t rh" style="top:732.6px;width:18px;text-align:center;">16</div>
  <div class="t rh" style="top:758.6px;width:18px;text-align:center;">17</div>
  <div class="t rh" style="top:784.6px;width:18px;text-align:center;">18</div>
  <div class="t rh" style="top:810.6px;width:18px;text-align:center;clip-path:inset(0 0 10px 0);">19</div>
  <div class="t ct" id="c-name" style="left:36px;top:342.3px;font-weight:bold">name</div>
  <div class="t ct" id="c-age" style="left:137px;width:100px;text-align:right;top:342.3px;font-weight:bold">age</div>
  <div class="t ct" id="c-n0" style="left:36px;top:368.4px;">nick</div>
  <div class="t ct" id="c-a0" style="left:137px;width:100px;text-align:right;top:368.4px;">29</div>
  <div class="t ct" id="c-n1" style="left:36px;top:394.4px;">victor</div>
  <div class="t ct" id="c-a1" style="left:137px;width:100px;text-align:right;top:394.4px;">25</div>
  <div class="t ct" id="c-n2" style="left:36px;top:420.4px;">peter</div>
  <div class="t ct" id="c-a2" style="left:137px;width:100px;text-align:right;top:420.4px;">22</div>
  <!-- sheet tab bar -->
  <div class="a" style="left:0;top:820px;width:1478px;height:52px;background:linear-gradient(#ebebeb,#f2f2f2 30%,#f1f1f1)"></div>
  <div class="a" style="left:0;top:820px;width:1478px;height:2px;background:#c9c9c9"></div>
  <div class="a" style="left:107.4px;top:820px;width:157px;height:45.2px;background:#fff;border:1.4px solid #bcbcbc;border-top:none;border-radius:0 0 6px 6px;box-sizing:border-box;box-shadow:0 1.5px 2px rgba(0,0,0,.28)"></div>
  <div class="a" style="left:108.8px;top:819px;width:154.2px;height:4px;background:#fff"></div>
  <svg class="a" style="left:31px;top:812px" width="240" height="10" viewBox="31 812 240 10"><path d="M137 812 V821 M243 812 V821" stroke="#cfcfcf" stroke-width="1.7"/></svg>
  <svg class="a" style="left:10px;top:832px" width="72" height="30" viewBox="0 0 72 30">
    <path d="M19 6 V24 L6.6 15 Z" fill="#b5b5b5" stroke="#b5b5b5" stroke-width="2" stroke-linejoin="round"/>
    <path d="M53.2 6 V24 L65.6 15 Z" fill="#b5b5b5" stroke="#b5b5b5" stroke-width="2" stroke-linejoin="round"/>
  </svg>
  <div class="t" id="s-sheet1" style="left:145.6px;top:834.4px;font-size:23.4px;font-weight:bold;color:#3c8b57;letter-spacing:0.12px">Sheet1</div>
  <div class="t" id="s-eval" style="-webkit-text-stroke:0.25px #595959;left:302.2px;top:834.3px;font-size:23.4px;color:#595959;letter-spacing:0.799px">Evaluation Warning</div>
  <div class="a" style="left:554.2px;top:822px;width:1.5px;height:41px;background:#cacaca"></div>
  <div class="a" style="left:630.2px;top:822px;width:1.5px;height:41px;background:#cacaca"></div>
  <div class="a" style="left:584.2px;top:843.2px;width:19.8px;height:4px;background:#575757"></div>
  <div class="a" style="left:592.1px;top:835.4px;width:4px;height:19.6px;background:#575757"></div>
  <!-- status bar -->
  <div class="a" style="left:0;top:872px;width:1478px;height:47px;background:linear-gradient(#e5e5e5,#d6d6d6)"></div>
  <div class="a" style="left:0;top:872px;width:1478px;height:2.2px;background:linear-gradient(#a3a3a3,#bdbdbd)"></div>
  <div class="t" id="s-ready" style="left:33.9px;top:884.4px;font-size:23.8px;color:#4a4a4a;letter-spacing:0.4px">Ready</div>
  <div class="a" style="left:842.2px;top:873px;width:73.6px;height:45px;background:#a9a9a9"></div>
  <svg class="a" style="left:862px;top:878px" width="34" height="34" viewBox="0 0 34 34">
    <rect x="4" y="3.9" width="26" height="26.2" rx="2" fill="#fff"/>
    <g fill="#a9a9a9"><rect x="6.2" y="6.2" width="5.6" height="5.6"/><rect x="14.2" y="6.2" width="5.6" height="5.6"/><rect x="22.2" y="6.2" width="5.6" height="5.6"/>
    <rect x="6.2" y="14.2" width="5.6" height="5.6"/><rect x="14.2" y="14.2" width="5.6" height="5.6"/><rect x="22.2" y="14.2" width="5.6" height="5.6"/>
    <rect x="6.2" y="22.2" width="5.6" height="5.6"/><rect x="14.2" y="22.2" width="5.6" height="5.6"/><rect x="22.2" y="22.2" width="5.6" height="5.6"/></g>
  </svg>
  <svg class="a" style="left:933px;top:878px" width="36" height="34" viewBox="0 0 36 34">
    <rect x="5.1" y="4.8" width="25.8" height="24.2" rx="1.2" fill="none" stroke="#696969" stroke-width="1.9"/>
    <rect x="11.3" y="9.2" width="13.4" height="15.6" fill="none" stroke="#696969" stroke-width="1.9"/>
    <path d="M14.6 13.2 H21.4 M14.6 17 H21.4 M14.6 20.8 H21.4" stroke="#696969" stroke-width="1.7" fill="none"/>
  </svg>
  <svg class="a" style="left:1004px;top:878px" width="36" height="34" viewBox="0 0 36 34">
    <rect x="5.3" y="4.8" width="25.6" height="24.2" rx="1.2" fill="none" stroke="#696969" stroke-width="1.9"/>
    <path d="M12.1 5 V18.9 M21.2 5 V18.9 M5 18.9 H22.1" stroke="#696969" stroke-width="1.9" fill="none"/>
  </svg>
  <div class="a" style="left:1074px;top:892.8px;width:16px;height:4.6px;background:#6b6b6b;border-radius:1px"></div>
  <div class="a" style="left:1104px;top:892px;width:260px;height:8px;background:#9d9d9d;border-radius:4px"></div>
  <div class="a" style="left:1188px;top:879px;width:32px;height:32px;border-radius:50%;background:#fff;box-shadow:0 1px 2.5px rgba(0,0,0,.35)"></div>

</div>

<div class="a" style="left:1302px;top:912px;width:172px;height:8px;background:#e4e4e4;"></div>
<div class="a" style="left:1472px;top:912px;width:888px;height:8px;background:linear-gradient(#a98a52,#94753f);"></div>
<svg class="a" style="left:1472px;top:914px" width="888" height="6" viewBox="1472 914 888 6">
  <g fill="#d9d2c4"><rect x="1478" y="915.6" width="40" height="3" rx="1.5"/><rect x="1564" y="915.6" width="70" height="3" rx="1.5"/><rect x="1690" y="915.6" width="62" height="3" rx="1.5"/><rect x="1780" y="915.6" width="22" height="3" rx="1.5"/><rect x="1864" y="915.6" width="140" height="3" rx="1.5"/><rect x="2124" y="915.6" width="104" height="3" rx="1.5"/></g>
</svg>
<svg class="a" style="left:1330px;top:915px" width="120" height="5" viewBox="1330 915 120 5"><g fill="#333"><rect x="1340" y="917" width="22" height="3"/><rect x="1372" y="917" width="42" height="3"/></g></svg>
<!-- ======================= SUBLIME ======================= -->
<div id="st" class="a">
  <div id="st-title" class="a"></div>
  <div class="a" style="left:0;top:55.6px;width:1080px;height:1.6px;background:#45463f"></div>
  <div class="a stl" style="left:16px;background:#ee6a5e;border-color:#d7574b"></div>
  <div class="a" style="left:23.8px;top:23.8px;width:8.4px;height:8.4px;border-radius:50%;background:#7a0e08"></div>
  <div class="a stl" style="left:56px;background:#f5be4f;border-color:#dba43c"></div>
  <div class="a stl" style="left:96px;background:#62c554;border-color:#52a93f"></div>
  <svg class="a" style="left:394px;top:9px" width="30" height="34" viewBox="0 0 30 34">
    <path d="M4.2 1.8 H17.5 L26 10.5 V30 Q26 31.8 24.2 31.8 H4.2 Q2.6 31.8 2.6 30 V3.6 Q2.6 1.8 4.2 1.8 Z" fill="#f6f5f3" stroke="#dfdedb" stroke-width="1"/>
    <path d="M17.5 1.8 V8.8 Q17.5 10.5 19.2 10.5 H26 Z" fill="#eceae7" stroke="#dcdad6" stroke-width="0.8"/>
  </svg>
  <div class="t" id="t-title" style="left:431.1px;top:15.3px;font-size:25px;font-weight:bold;color:#4c4c4c;letter-spacing:1.135px">DocumentConversionProgress.xml</div>
  <div id="st-tabs" class="a"></div>
  <svg class="a" style="left:0;top:57px" width="1080" height="67" viewBox="0 57 1080 67">
    <path d="M22.4 90 L38 79.8 V100.3 Z M65.9 90 L49.8 79.8 V100.3 Z" fill="#c5c5c3"/>
    <defs><filter id="tb" x="-5%" y="-20%" width="110%" height="140%"><feGaussianBlur stdDeviation="4"/></filter></defs>
    <path d="M87.9 126 L110.4 73.4 Q113.4 66.2 120.8 66.2 H551 Q556.4 66.2 558.8 71.6 L582.2 126 Z" fill="#2a2b26" opacity="0.55" filter="url(#tb)"/>
    <path d="M87.9 124 L110.4 73.4 Q113.4 66.2 120.8 66.2 H551 Q556.4 66.2 558.8 71.6 L582.2 124 Z" fill="#272822"/>
    <circle cx="526.9" cy="95" r="7" fill="#939391"/>
  </svg>
  <div class="t" id="t-tab" style="-webkit-text-stroke:0.3px #fff;left:131.8px;top:83.2px;font-size:22px;color:#fff;letter-spacing:0.799px">DocumentConversionProgress.xml</div>
  <!-- editor -->
  <div class="a" style="left:0;top:124px;width:6.2px;height:240px;background:#e9dc72"></div>
  <div class="a" style="left:6.2px;top:274px;width:98px;height:30px;background:#3e3d32"></div>
  <svg class="a" style="left:100px;top:180px" width="240" height="170" viewBox="100 180 240 170">
    <path d="M115 187 V332" stroke="#5c5c56" stroke-width="2" stroke-dasharray="1 1" fill="none"/>
    <path d="M171 217 V302" stroke="#5c5c56" stroke-width="2" stroke-dasharray="1 1" fill="none"/>
    <path d="M184 215 H309.5" stroke="#cfcfc8" stroke-width="2" stroke-dasharray="1 1" fill="none"/>
    <path d="M198 335 H323.5" stroke="#cfcfc8" stroke-width="2" stroke-dasharray="1 1" fill="none"/>
    <rect x="225" y="270" width="2.6" height="38" fill="#4a4a42"/>
  </svg>
  <div class="code" style="top:124px">&lt;?<span class="p">xml</span> <span class="g">version</span>=<span class="y">"1.0"</span> <span class="g">encoding</span>=<span class="y">"utf-8"</span>?&gt;</div>
  <div class="ln" style="top:124px">1</div>
  <div class="code" style="top:154px">&lt;<span class="p">root</span>&gt;</div>
  <div class="ln" style="top:154px">2</div>
  <div class="code" style="top:184px">    &lt;<span class="p">worksheet</span> <span class="g">name</span>=<span class="y">"Sheet1"</span>&gt;</div>
  <div class="ln" style="top:184px">3</div>
  <div class="code" style="top:214px">        &lt;<span class="p">Row</span>  <span class="g">index</span>=<span class="y">"1"</span>&gt;&lt;<span class="p">name</span>&gt;nick&lt;/<span class="p">name</span>&gt;&lt;<span class="p">age</span>&gt;29&lt;/<span class="p">age</span>&gt;&lt;/<span class="p">Row</span> &gt;</div>
  <div class="ln" style="top:214px">4</div>
  <div class="code" style="top:244px">        &lt;<span class="p">Row</span>  <span class="g">index</span>=<span class="y">"2"</span>&gt;&lt;<span class="p">name</span>&gt;victor&lt;/<span class="p">name</span>&gt;&lt;<span class="p">age</span>&gt;25&lt;/<span class="p">age</span>&gt;&lt;/<span class="p">Row</span> &gt;</div>
  <div class="ln" style="top:244px">5</div>
  <div class="code" style="top:274px">        &lt;<span class="p">Row</span>  <span class="g">index</span>=<span class="y">"3"</span>&gt;&lt;<span class="p">name</span>&gt;peter&lt;/<span class="p">name</span>&gt;&lt;<span class="p">age</span>&gt;22&lt;/<span class="p">age</span>&gt;&lt;/<span class="p">Row</span> &gt;</div>
  <div class="ln" style="top:274px">6</div>
  <div class="code" style="top:304px">    &lt;/<span class="p">worksheet</span>&gt;&lt;<span class="p">worksheet</span> <span class="g">name</span>=<span class="y">"Evaluation Warning"</span> /&gt;</div>
  <div class="ln" style="top:304px">7</div>
  <div class="code" style="top:334px">&lt;/<span class="p">root</span>&gt;</div>
  <div class="ln" style="top:334px">8</div>
  <div id="st-status" class="a"></div>
  <svg class="a" style="left:20px;top:870px" width="40" height="32" viewBox="0 0 40 32">
    <path d="M7.2 5 H32.6 Q35.2 5 35.2 7.6 V25 Q35.2 27.6 32.6 27.6 H7.2 Q4.6 27.6 4.6 25 V7.6 Q4.6 5 7.2 5 Z" fill="none" stroke="#686c74" stroke-width="1.8"/>
    <path d="M4.6 20.3 H35.2 V25 Q35.2 27.6 32.6 27.6 H7.2 Q4.6 27.6 4.6 25 Z" fill="#686c74"/>
  </svg>
  <div class="t" id="t-linecol" style="left:79.3px;top:874.6px;font-size:23.4px;color:#3e4147;letter-spacing:0.114px">Line 6, Column 9</div>
  <div class="t" id="t-tabsize" style="left:907.5px;top:874.6px;font-size:23.4px;color:#3e4147;letter-spacing:-0.25px">Tab Size: 4</div>
</div>
</body>
</html>
